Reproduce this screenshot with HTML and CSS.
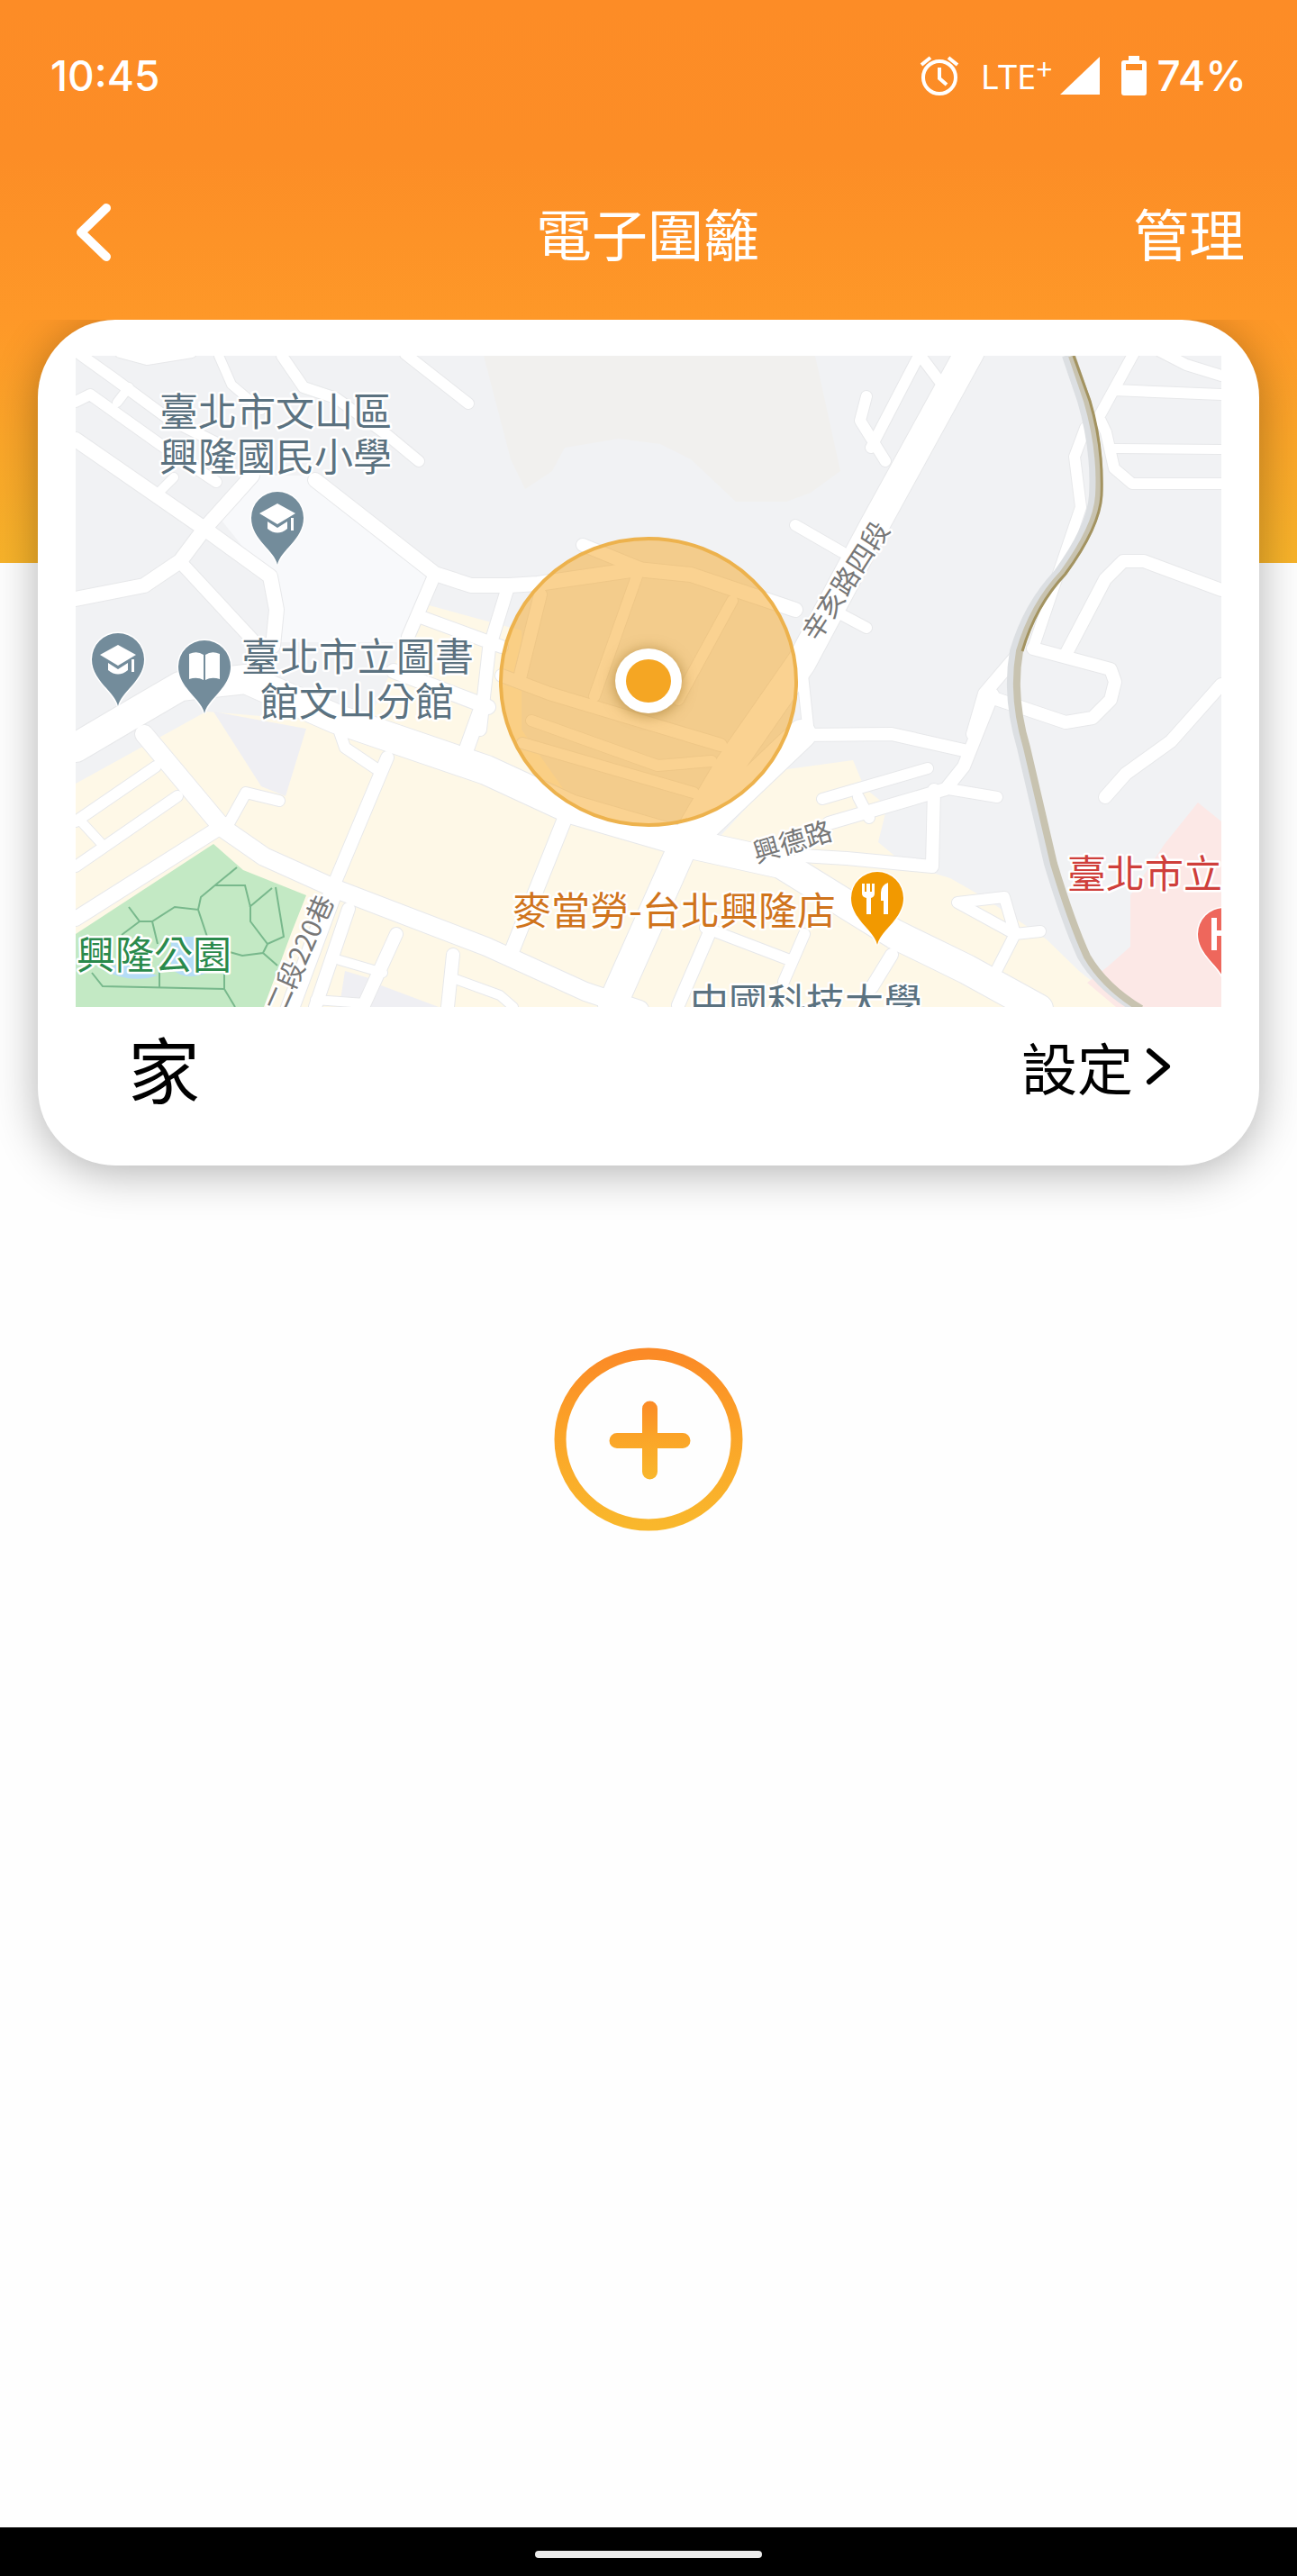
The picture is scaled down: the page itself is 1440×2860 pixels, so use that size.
FILE: index.html
```html
<!DOCTYPE html>
<html lang="zh-Hant">
<head>
  <meta charset="UTF-8" />
  <meta name="viewport" content="width=device-width, initial-scale=1.0"/>
  <title>電子圍籬</title>
  <link rel="stylesheet" href="styles.css">
</head>
<body>
  <div class="status-bar">
    <span class="clock">10:45</span>
    <div class="status-icons">
      <svg class="alarm" width="44" height="44" viewBox="0 0 44 44" fill="none" stroke="#fff" stroke-width="4">
        <ellipse cx="22" cy="24" rx="18" ry="18"/>
        <path d="M22 13v12l8 7M2 10l10-8M42 10L32 2"/>
      </svg>
      <span class="network">LTE<sup>+</sup></span>
      <svg class="signal" width="44" height="44" viewBox="0 0 44 44" fill="#fff"><path d="M44 1v42H0z"/></svg>
      <svg class="battery" width="28" height="46" viewBox="0 0 28 46" fill="#fff">
        <path fill-rule="evenodd" d="M8 1h12v5h5q3 0 3 3v33q0 3-3 3H3q-3 0-3-3V9q0-3 3-3h5zM5 10v7h18v-7z"/>
      </svg>
      <span class="percent">74%</span>
    </div>
  </div>

  <header class="title-bar">
    <button class="back" aria-label="返回">
      <svg width="40" height="66" viewBox="0 0 40 66" fill="none" stroke="#fff" stroke-width="10" stroke-linecap="round" stroke-linejoin="round"><path d="M34 6L6 33l28 27"/></svg>
    </button>
    <h1>電子圍籬</h1>
    <button class="manage">管理</button>
  </header>

  <main class="content">
    <article class="card">
      <svg class="map" viewBox="84 395 1272 723" role="img" aria-label="家">
        <defs>
          <g id="roads" class="roads">
            <path class="w10" d="M130 447l13-17M243 395l14 32 33 28M133 392l30 8 50-8M173 550l20-20M90 912l23 25M377 1066l48 14M500 1085l55 20 15 13M350 1110l55 4M1237 498l119 1"/>
            <path class="w12" d="M84 390l42 30 61 45 60 30M84 446l16-8 80 57 60 40M313 395l24 35 36 12 57 41 35 29M450 393l70 55M84 962l113-78M84 912l89-61M253 916l20-36 37 9M373 801l10 29 37 25M783 1030l94 36M893 1037l-23 53M913 887l117-34M953 885l12 23M1053 876l54 9M1020 395l-53 102M962 440l-7 27 28 45M1022 395l21 28M883 583l52 30M930 680l32 17M707 640l-47 133M813 667l-60 110M890 740l8 75M1260 390l-40 73 8 17 9 40 20 17h99M1237 433l119 5M1288 390l29 15 39 12M1205 475l-12 32 7 56-22 65-31 92M1063 1002l52-6 12 41zM1127 1037l28-3M1103 1084l24-47M590 800l140 50 60-5M580 825l190 55"/>
            <path class="w14" d="M203 627l77 83M430 841l-60 143M387 1009l-37 109M440 1037l-37 81M503 1060l-6 58M787 1037l-34 79M990 1060l-22 36M890 950l50 3 95 9 2-85M920 914l130-38 20-25 32-80M890 816l100-1 80 18M1356 655l-86-32h-23l-20 20-44 84M1147 720l86 23 5 14-5 20-20 20-30 5-86-29M1127 730l-34 40-13 45M1356 760l-56 63-50 36-23 26M600 660l-23 93M483 637l-30 70M563 655l-20 65-10 90M467 685l90 33M557 750l53 20 190 57M647 605l66 27"/>
            <path class="w16" d="M84 488l143 99 73 53 7 37-4 40M84 665l76-15 40-27 27-36 53-59M350 533l133 104 40 13h42l32-2 110-16 60 6 116 39M627 909l-60 150M84 1020l166-105M437 745l105 40M533 790l-18 50"/>
            <path class="w20" d="M160 815l87 104 46 32 80 36 167 64 110 50 60 20M370 990l-52 140"/>
            <path class="w30" d="M84 830l56-33 60-35 73-8 100 44 167 57 93 43 134 39 100 22 126 78 80 39 80 44M1077 390L970 585 890 735l-80 115-50 85-80 180M890 815l-105 100"/>
          </g>
          <g id="pin">
            <path class="pin-edge" d="M0 52C-3 36-29 24-29 0a29 29 0 0 1 58 0C29 24 3 36 0 52z"/>
          </g>
          <g id="cap" fill="#fff">
            <path d="M-20-5L0-16 20-5 0 7zM-11 4L0 11 11 4v8q-11 9-22 0z"/>
            <path d="M15 0h3v14h-3z"/>
          </g>
        </defs>

        <rect class="land" x="84" y="395" width="1272" height="723"/>
        <path class="hill" d="M537 395h368l28 128-33 24-27 10h-56l-50-47-34-17-46-6-60 10-14 26-30 20-16-33z"/>
        <path class="campus" d="M240 570l35-42h75l133 110-35 75H303l-5-70z"/>
        <path class="block" d="M84 870l145-80 120 10h60l60-130 110 30v110l60 85 150 45 78-85 80-11 13 31 25 20-10 40 30 25 50 15 35 20 72 48 36 35 50 40H84z"/>
        <path class="land-patch" d="M237 790l103 19-23 75-27-11zM383 1078l27 8-12 30-20-6zM423 1094l64 24h-80z"/>
        <path class="hospital" d="M1330 891l26 21v206h-117l-32-27 23-18 25-22v-57l38-57z"/>
        <path class="park" d="M237 937l33 29 70 28-17 43-30 81H84v-81z"/>
        <path class="pond" d="M115 1077q20-12 40 0l20 6q-30 10-60-6zM190 1040h25v35l15 5q-25 10-40-5z"/>
        <path class="park-path" d="M143 1007l12 16h14l25-16 26 3 3-14 18-15 22-18M239 983h33l6 24v16l19 25 18-8-9-55M277 1007l25-21M220 1010l10 30M155 1023l-20 15M169 1023l6 25M255 1057l14 4 23-3 5-10M292 1058l16 14M102 1080l12 15 135 3 12 20M249 1098v-20M177 1096v-25"/>

        <use class="edge" href="#roads"/>
        <use href="#roads"/>

        <path class="rail-shadow" d="M1183 395l17 50q16 55 13 105-2 35-40 87-33 35-48 86-9 50 8 107l30 129q20 66 37 103 20 34 60 58"/>
        <path class="rail" d="M1190 395l17 50q16 55 13 105-2 35-40 87-33 35-48 86-9 50 8 107l30 129q20 66 37 103 20 34 60 58"/>
        <path class="rail-line" d="M1192 395l18 50q15 50 13 105-2 35-40 87-33 35-48 86"/>

        <ellipse class="fence" cx="720" cy="757" rx="164" ry="159"/>
        <ellipse class="spot" cx="720" cy="756" rx="37" ry="36"/>
        <ellipse fill="#f5a623" cx="720" cy="756" rx="25" ry="24"/>

        <g class="label road-label">
          <text transform="translate(948 651) rotate(-57)">辛亥路四段</text>
          <text transform="translate(883 945) rotate(-17)">興德路</text>
          <text transform="translate(343 1064) rotate(-66)">二段220巷</text>
        </g>
        <g class="label place">
          <text x="177" y="473">臺北市文山區</text>
          <text x="177" y="523">興隆國民小學</text>
          <text x="268" y="745">臺北市立圖書</text>
          <text x="289" y="795">館文山分館</text>
          <text x="766" y="1129">中國科技大學</text>
          <text class="food" x="569" y="1027">麥當勞-台北興隆店</text>
          <text class="clinic" x="1185" y="986">臺北市立</text>
          <text class="garden" x="85" y="1076">興隆公園</text>
        </g>

        <g fill="#738c9b">
          <g transform="translate(308 575)"><use href="#pin"/><use href="#cap"/></g>
          <g transform="translate(131 732)"><use href="#pin"/><use href="#cap"/></g>
          <g transform="translate(227 740)"><use href="#pin"/><path fill="#fff" d="M-17-14q9-4 16 1v28q-7-4-16-1zM17-14q-9-4-16 1v28q7-4 16-1z"/></g>
        </g>
        <g fill="#f29900" transform="translate(974 997)">
          <use href="#pin"/>
          <path fill="#fff" d="M-17-16h3v9h2v-9h4v9h2v-9h3v11q0 4-4 5v18h-5V0q-5-1-5-5zM12-17v35H7V3H4V-6q0-8 8-11z"/>
        </g>
        <g fill="#ee675c" transform="translate(1359 1037)">
          <use href="#pin"/>
          <path fill="#fff" d="M-14-18h6v14H8v-14h6v36H8V2H-8v16h-6z"/>
        </g>
      </svg>

      <div class="card-footer">
        <h2>家</h2>
        <button class="settings">設定
          <svg width="28" height="42" viewBox="0 0 28 42" fill="none" stroke="#000" stroke-width="6" stroke-linecap="round" stroke-linejoin="round"><path d="M4 4l20 17L4 38"/></svg>
        </button>
      </div>
    </article>

    <button class="add" aria-label="新增">
      <svg width="210" height="204" viewBox="0 0 210 204">
        <defs>
          <linearGradient id="ring" x1="0" y1="0" x2="0" y2="1">
            <stop offset="0" stop-color="#fb8a26"/>
            <stop offset=".45" stop-color="#fba428"/>
            <stop offset="1" stop-color="#f9b72c"/>
          </linearGradient>
        </defs>
        <ellipse cx="105" cy="102" rx="98" ry="95" fill="none" stroke="url(#ring)" stroke-width="13"/>
        <path fill="url(#ring)" d="M98 68a8 8 0 0 1 17 0v27h28a8 8 0 0 1 0 17h-28v26a8 8 0 0 1-17 0v-26H70a8 8 0 0 1 0-17h28z"/>
      </svg>
    </button>
  </main>

  <footer class="nav-bar"><span class="handle"></span></footer>
</body>
</html>
```

FILE: styles.css
```css
* {
  box-sizing: border-box;
}
body {
  margin: 0;
  min-height: 100vh;
  display: flex;
  flex-direction: column;
  font-family: "Noto Sans CJK TC", sans-serif;
  color: #000;
  background: #fefefe linear-gradient(to bottom, #fd8c26 0, #fc8d26 170px, #fe9828 355px, #f7b32a 625px) no-repeat;
  background-size: 100% 625px;
}
button {
  border: none;
  padding: 0;
  background: none;
  font: inherit;
  color: inherit;
  cursor: pointer;
}
svg {
  display: block;
}

/* status bar */
.status-bar {
  display: flex;
  justify-content: space-between;
  align-items: center;
  padding: 56px 56px 0;
  line-height: 56px;
  font-family: Inter, sans-serif;
  font-size: 46px;
  font-weight: 500;
  color: #fff;
}
.status-icons {
  display: flex;
  align-items: center;
}
.network {
  margin: 0 8px 0 24px;
  font-family: "Noto Sans", sans-serif;
  font-size: 38px;
  font-weight: 400;
}
.network sup {
  font-size: 32px;
  line-height: 0;
  vertical-align: 10px;
}
.battery {
  margin: 0 12px 0 24px;
}

/* title bar */
.title-bar {
  display: grid;
  grid-template-columns: 1fr auto 1fr;
  align-items: center;
  padding: 96px 58px 47px 56px;
  font-size: 62px;
  line-height: 100px;
  color: #fff;
}
.title-bar h1 {
  margin: 0;
  font-size: 62px;
  font-weight: 400;
}
.back {
  justify-self: start;
  padding-left: 28px;
}
.manage {
  justify-self: end;
}

/* fence list */
.content {
  flex: 1;
  padding: 0 42px 40px;
  overflow: hidden;
}
.card {
  padding: 40px 42px 44px;
  border-radius: 86px;
  background: #fff;
  box-shadow: 0 8px 50px rgba(0, 0, 0, 0.3);
}
.card-footer {
  display: flex;
  justify-content: space-between;
  align-items: center;
  padding: 0 56px 0 58px;
  line-height: 132px;
}
.card-footer h2 {
  margin: 0;
  font-size: 80px;
  font-weight: 400;
}
.settings {
  display: flex;
  align-items: center;
  gap: 14px;
  font-size: 62px;
}
.add {
  display: block;
  margin: 202px auto 0;
}

/* map */
.map {
  width: 100%;
  height: auto;
}
.land { fill: #f1f2f4; }
.hill { fill: #f1f0ee; }
.campus { fill: #f8f9fb; }
.block { fill: #fef8e7; }
.land-patch { fill: #efeff3; }
.hospital { fill: #fce8e6; }
.park { fill: #c3e9c4; }
.pond { fill: #b5dcf5; }
.park-path {
  fill: none;
  stroke: #78b88c;
  stroke-width: 2px;
}
.roads {
  fill: none;
  stroke-linecap: round;
  stroke-linejoin: round;
}
.edge {
  --edge-line: #e7e8ea;
  --edge-width: 2px;
}
.roads path { stroke: var(--edge-line, #fff); }
.w10 { stroke-width: calc(10px + var(--edge-width, 0px)); }
.w12 { stroke-width: calc(12px + var(--edge-width, 0px)); }
.w14 { stroke-width: calc(14px + var(--edge-width, 0px)); }
.w16 { stroke-width: calc(16px + var(--edge-width, 0px)); }
.w20 { stroke-width: calc(20px + var(--edge-width, 0px)); }
.w30 { stroke-width: calc(32px + var(--edge-width, 0px)); }
.rail-shadow, .rail, .rail-line {
  fill: none;
  stroke: #dcdfe2;
  stroke-width: 8px;
}
.rail { stroke: #c8c3b0; }
.rail-line {
  stroke: #a39360;
  stroke-width: 3px;
}
.fence {
  fill: #f5a623;
  fill-opacity: 0.5;
  stroke: #edb24d;
  stroke-width: 4px;
}
.spot {
  fill: #fff;
  filter: drop-shadow(0 2px 8px rgba(120, 80, 0, 0.5));
}
.label {
  paint-order: stroke;
  stroke: #fff;
  stroke-width: 5px;
  stroke-linejoin: round;
}
.road-label {
  font-size: 30px;
  fill: #777;
  text-anchor: middle;
}
.place {
  font-size: 43px;
  fill: #5b7280;
}
.food { fill: #d0741c; }
.clinic { fill: #cf3f3b; }
.garden { fill: #2a8a4c; }
.pin-edge {
  stroke: #fff;
  stroke-width: 3px;
  paint-order: stroke;
}

/* gesture bar */
.nav-bar {
  display: flex;
  justify-content: center;
  padding: 26px 0 20px;
  background: #000;
}
.handle {
  width: 252px;
  height: 8px;
  border-radius: 4px;
  background: #ebebeb;
}
```
